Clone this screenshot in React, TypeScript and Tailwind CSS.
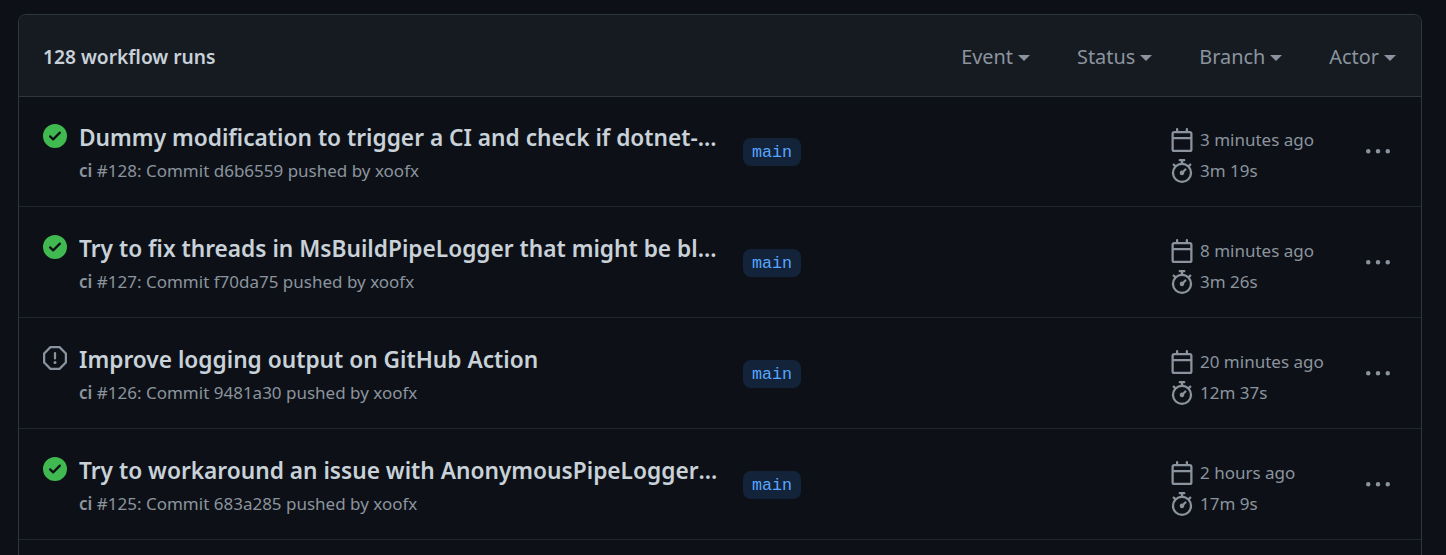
type Run = {
    title: string;
    number: number;
    commit: string;
    ago: string;
    duration: string;
    failed?: boolean;
};

const runs: Run[] = [
    { title: 'Dummy modification to trigger a CI and check if dotnet-releaser works fine', number: 128, commit: 'd6b6559', ago: '3 minutes ago', duration: '3m 19s' },
    { title: 'Try to fix threads in MsBuildPipeLogger that might be blocking the process', number: 127, commit: 'f70da75', ago: '8 minutes ago', duration: '3m 26s' },
    { title: 'Improve logging output on GitHub Action', number: 126, commit: '9481a30', ago: '20 minutes ago', duration: '12m 37s', failed: true },
    { title: 'Try to workaround an issue with AnonymousPipeLoggerServer on Windows', number: 125, commit: '683a285', ago: '2 hours ago', duration: '17m 9s' },
];

const filters = ['Event', 'Status', 'Branch', 'Actor'];

function Octicon({ d, className }: { d: string; className?: string }) {
    return (
        <svg viewBox="0 0 16 16" width={24} height={24} fill="currentColor" className={className}>
            <path fillRule="evenodd" d={d} />
        </svg>
    );
}

const checkCircle = 'M8 16A8 8 0 1 1 8 0a8 8 0 0 1 0 16Zm3.78-9.72a.751.751 0 0 0-.018-1.042.751.751 0 0 0-1.042-.018L6.75 9.19 5.28 7.72a.751.751 0 0 0-1.042.018.751.751 0 0 0-.018 1.042l2 2a.75.75 0 0 0 1.06 0Z';
const stop = 'M4.47.22A.749.749 0 0 1 5 0h6c.199 0 .389.079.53.22l4.25 4.25c.141.14.22.331.22.53v6a.749.749 0 0 1-.22.53l-4.25 4.25A.749.749 0 0 1 11 16H5a.749.749 0 0 1-.53-.22L.22 11.53A.749.749 0 0 1 0 11V5c0-.199.079-.389.22-.53Zm.84 1.28L1.5 5.31v5.38l3.81 3.81h5.38l3.81-3.81V5.31L10.69 1.5ZM8 4a.75.75 0 0 1 .75.75v3.5a.75.75 0 0 1-1.5 0v-3.5A.75.75 0 0 1 8 4Zm0 8a1 1 0 1 1 0-2 1 1 0 0 1 0 2Z';
const calendar = 'M4.75 0a.75.75 0 0 1 .75.75V2h5V.75a.75.75 0 0 1 1.5 0V2h1.25c.966 0 1.75.784 1.75 1.75v10.5A1.75 1.75 0 0 1 13.25 16H2.75A1.75 1.75 0 0 1 1 14.25V3.75C1 2.784 1.784 2 2.75 2H4V.75A.75.75 0 0 1 4.75 0ZM2.5 7.5v6.75c0 .138.112.25.25.25h10.5a.25.25 0 0 0 .25-.25V7.5Zm10.75-4H2.75a.25.25 0 0 0-.25.25V6h11V3.75a.25.25 0 0 0-.25-.25Z';
const stopwatch = 'M5.75.75A.75.75 0 0 1 6.5 0h3a.75.75 0 0 1 0 1.5h-.75v1l-.001.041a6.724 6.724 0 0 1 3.464 1.435l.007-.006.75-.75a.751.751 0 0 1 1.042.018.751.751 0 0 1 .018 1.042l-.75.75-.006.007a6.75 6.75 0 1 1-10.548 0L2.72 5.03l-.75-.75a.751.751 0 0 1 .018-1.042.751.751 0 0 1 1.042-.018l.75.75.007.006A6.72 6.72 0 0 1 7.25 2.541V1.5H6.5a.75.75 0 0 1-.75-.75ZM8 14.5a5.25 5.25 0 1 0-.001-10.501A5.25 5.25 0 0 0 8 14.5Zm.389-6.7 1.33-1.33a.75.75 0 1 1 1.061 1.06L9.45 8.861A1.503 1.503 0 0 1 8 10.75a1.499 1.499 0 1 1 .389-2.95Z';
const kebab = 'M8 9a1.5 1.5 0 1 0 0-3 1.5 1.5 0 0 0 0 3ZM1.5 9a1.5 1.5 0 1 0 0-3 1.5 1.5 0 0 0 0 3Zm13 0a1.5 1.5 0 1 0 0-3 1.5 1.5 0 0 0 0 3Z';

function RunRow({ run }: { run: Run }) {
    return (
        <div className="flex h-[111px] border-b border-[#21262d] pt-px first:h-[110px] first:pt-0">
            <div className="w-[60px] shrink-0 pl-6 pt-[27px]">
                {run.failed ? (
                    <Octicon d={stop} className="text-[#8b949e]" />
                ) : (
                    <Octicon d={checkCircle} className="text-[#3fb950]" />
                )}
            </div>
            <div className="w-[642px] shrink-0 pt-[25px]">
                <div className="truncate text-[22.7px] leading-[32px] font-semibold text-[#c9d1d9]">{run.title}</div>
                <div className="mt-[6px] text-[17px] leading-[22px] text-[#8b949e]">
                    <span className="font-semibold">ci</span> #{run.number}: Commit {run.commit} pushed by xoofx
                </div>
            </div>
            <div className="w-[449px] shrink-0 pl-[22px] pt-[41px]">
                <span className="inline-block h-[28px] rounded-lg bg-[#388bfd]/15 px-[9px] font-['Liberation_Mono',monospace] text-[16.7px] leading-[29px] text-[#58a6ff]">
                    main
                </span>
            </div>
            <div className="w-[196px] shrink-0 pt-[27px] text-[17px] text-[#8b949e]">
                <div className="flex h-[31px] items-center gap-[6px]">
                    <Octicon d={calendar} />
                    <span>{run.ago}</span>
                </div>
                <div className="flex h-[31px] items-center gap-[6px]">
                    <Octicon d={stopwatch} />
                    <span>{run.duration}</span>
                </div>
            </div>
            <div className="pt-[43px] text-[#8b949e]">
                <Octicon d={kebab} />
            </div>
        </div>
    );
}

export default function App() {
    return (
        <div className="h-[555px] overflow-hidden bg-[#0d1117] pl-[18px] pr-[24px] pt-[14px] font-['Noto_Sans',sans-serif]">
            <div className="h-[600px] rounded-lg border border-[#30363d]">
                <div className="flex h-[82px] items-center justify-between rounded-t-lg border-b border-[#30363d] bg-[#161b22] pl-6 pr-[25px] pt-1">
                    <h3 className="text-[19.2px] font-semibold text-[#c9d1d9]">128 workflow runs</h3>
                    <div className="-mt-px flex gap-[47px] text-[19.9px] text-[#8b949e]">
                        {filters.map((f) => (
                            <div key={f} className="flex items-center gap-[5px]">
                                <span>{f}</span>
                                <span className="mt-[2px] border-x-[6px] border-t-[6px] border-x-transparent border-t-[#8b949e]" />
                            </div>
                        ))}
                    </div>
                </div>
                <div>
                    {runs.map((run) => (
                        <RunRow key={run.number} run={run} />
                    ))}
                </div>
            </div>
        </div>
    );
}
